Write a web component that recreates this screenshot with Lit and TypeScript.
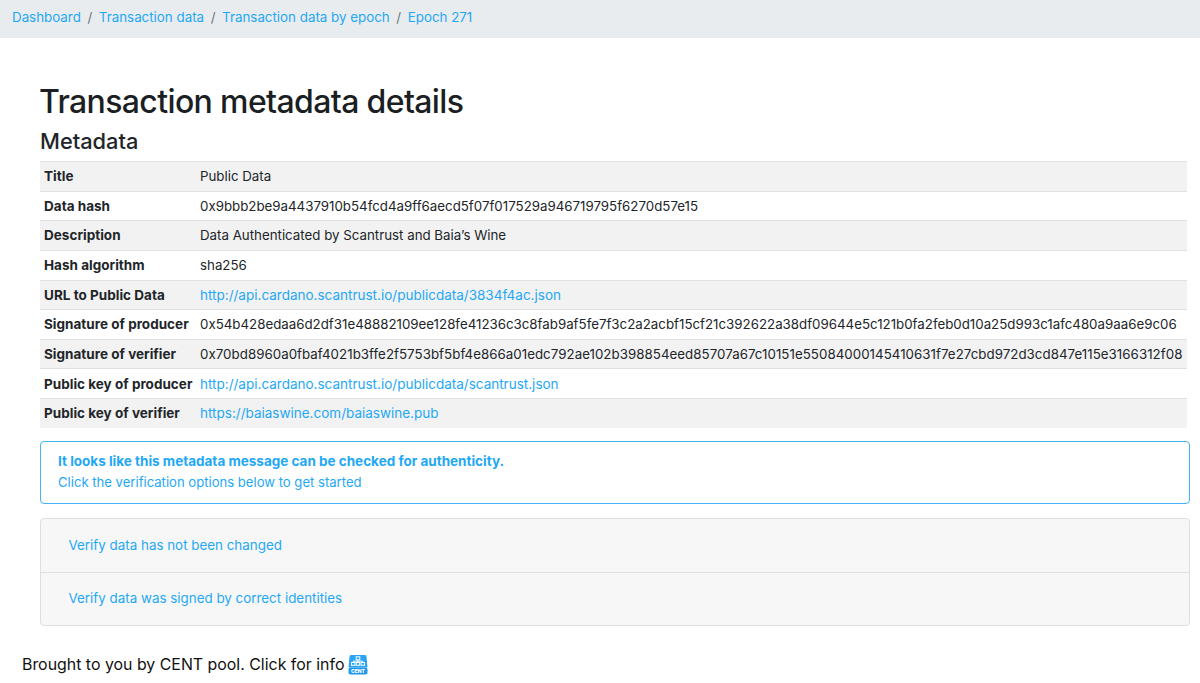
import { LitElement, html, css } from "lit";
import { customElement } from "lit/decorators.js";

const rows: [string, string, boolean][] = [
  ["Title", "Public Data", false],
  ["Data hash", "0x9bbb2be9a4437910b54fcd4a9ff6aecd5f07f017529a946719795f6270d57e15", false],
  ["Description", "Data Authenticated by Scantrust and Baia’s Wine", false],
  ["Hash algorithm", "sha256", false],
  ["URL to Public Data", "http://api.cardano.scantrust.io/publicdata/3834f4ac.json", true],
  ["Signature of producer", "0x54b428edaa6d2df31e48882109ee128fe41236c3c8fab9af5fe7f3c2a2acbf15cf21c392622a38df09644e5c121b0fa2feb0d10a25d993c1afc480a9aa6e9c06", false],
  ["Signature of verifier", "0x70bd8960a0fbaf4021b3ffe2f5753bf5bf4e866a01edc792ae102b398854eed85707a67c10151e55084000145410631f7e27cbd972d3cd847e115e3166312f08", false],
  ["Public key of producer", "http://api.cardano.scantrust.io/publicdata/scantrust.json", true],
  ["Public key of verifier", "https://baiaswine.com/baiaswine.pub", true],
];

@customElement("app-root")
export class AppRoot extends LitElement {
  static styles = css`
    :host { display: block; font-family: Inter, "Liberation Sans", sans-serif; color: #212529; font-size: 13.3px; background: #fff; height: 683px; overflow: hidden; }
    a { color: #1fa8f5; text-decoration: none; }
    .crumbs { display: flex; align-items: center; height: 34px; padding-bottom: 4px; background: #e9ecef; padding-left: 12px; gap: 6.6px; font-size: 13.35px; }
    .sep { color: #6c757d; }
    .main { padding: 46px 10px 0 40px; }
    h1 { margin: 0 0 0 -1px; font-size: 32px; font-weight: 500; line-height: 36px; letter-spacing: -0.63px; color: #1b1f23; }
    h2 { margin: 6px 0 0; font-size: 21.8px; font-weight: 500; line-height: 30px; }
    table { width: 1147px; table-layout: fixed; border-collapse: collapse; margin-top: 5px; }
    col.kc { width: 156px; }
    td { height: 29.65px; padding: 0 4px 0.6px; border-top: 1px solid #dee2e6; box-sizing: border-box; white-space: nowrap; overflow: visible; }
    td.k { font-weight: 700; font-size: 13.5px; letter-spacing: 0.02px; }
    td a { font-size: 13.5px; }
    tr:nth-child(odd) td { background: #f2f2f2; }
    tr:nth-child(7) td:last-child { letter-spacing: 0.04px; }
    .alert { margin-top: 13px; height: 62.5px; box-sizing: border-box; border: 1px solid #45b4f5; border-radius: 4px; padding: 0 17px 1.5px; display: flex; flex-direction: column; justify-content: center; gap: 5px; color: #1fa8f5; line-height: 16px; font-size: 13.1px; }
    .alert b { font-weight: 700; font-size: 13.5px; }
    .card { margin-top: 14.5px; border: 1px solid #dfdfdf; border-radius: 4px; background: #f7f7f7; }
    .item { height: 53px; box-sizing: border-box; display: flex; align-items: center; padding: 0 0 2px 27.5px; font-size: 13.38px; }
    .item + .item { border-top: 1px solid #dfdfdf; }
    .foot { display: flex; align-items: center; gap: 4px; margin: 28px 0 0 22px; font-size: 15.9px; color: #111; }
    svg { display: block; }
  `;

  render() {
    return html`
      <nav class="crumbs">
        <a href="#">Dashboard</a><span class="sep">/</span>
        <a href="#">Transaction data</a><span class="sep">/</span>
        <a href="#">Transaction data by epoch</a><span class="sep">/</span>
        <a href="#">Epoch 271</a>
      </nav>
      <div class="main">
        <h1>Transaction metadata details</h1>
        <h2>Metadata</h2>
        <table><colgroup><col class="kc" /><col /></colgroup><tbody>
          ${rows.map(([k, v, link]) => html`<tr><td class="k">${k}</td><td>${link ? html`<a href="#">${v}</a>` : v}</td></tr>`)}
        </tbody></table>
        <div class="alert">
          <b>It looks like this metadata message can be checked for authenticity.</b>
          <span>Click the verification options below to get started</span>
        </div>
        <div class="card">
          <div class="item"><a href="#">Verify data has not been changed</a></div>
          <div class="item"><a href="#">Verify data was signed by correct identities</a></div>
        </div>
      </div>
      <div class="foot">
        <span>Brought to you by CENT pool. Click for info</span>
        <svg width="20" height="21" viewBox="0 0 20 21">
          <path d="M3 1h14a1.5 1.5 0 0 1 1.5 1.5l1 11H.5l1-11A1.5 1.5 0 0 1 3 1z" fill="#2aa5f5"/>
          <rect x="0.5" y="13.5" width="19" height="7" rx="2" fill="#1f98ec"/>
          <g fill="none" stroke="#fff" stroke-width="1"><rect x="8.2" y="2.8" width="3.6" height="3"/><rect x="3.5" y="8.5" width="3.4" height="2.8"/><rect x="8.3" y="8.5" width="3.4" height="2.8"/><rect x="13.1" y="8.5" width="3.4" height="2.8"/><path d="M10 5.8V8.5M5.2 8.5V7.2h9.6V8.5"/></g>
          <text x="10" y="19" text-anchor="middle" font-size="5" font-weight="800" fill="#fff" font-family="Inter, sans-serif">CENT</text>
        </svg>
      </div>
    `;
  }
}
